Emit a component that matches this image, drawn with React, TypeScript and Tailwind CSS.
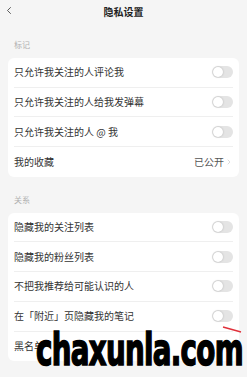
import { ChevronLeft, ChevronRight } from "lucide-react";

const font = { fontFamily: '"Noto Sans CJK SC", "Noto Sans", sans-serif' };

function Toggle() {
  return (
    <div className="w-[21px] h-[12px] rounded-full bg-[#e4e4e4] flex items-center px-[1px]">
      <div className="w-[10px] h-[10px] rounded-full bg-white shadow-[0_0_2px_rgba(0,0,0,0.25)]" />
    </div>
  );
}

function Row({ label, last, right }: { label: string; last?: boolean; right?: React.ReactNode }) {
  return (
    <div className="px-[6px]">
      <div className={`h-[29.7px] flex items-center justify-between ${last ? "" : "border-b border-[#efefef]"}`}>
        <span className="text-[10px] text-[#333] leading-none">{label}</span>
        {right ?? <Toggle />}
      </div>
    </div>
  );
}

function Section({ title, children, top }: { title: string; children: React.ReactNode; top: string }) {
  return (
    <div className={top}>
      <div className="px-[14px] text-[8px] leading-[10px] text-[#b0b0b0] mb-[8px]">{title}</div>
      <div className="mx-[8px] bg-white rounded-[6px]">{children}</div>
    </div>
  );
}

export default function App() {
  return (
    <div className="relative w-[247px] h-[377px] bg-[#f5f5f5] overflow-hidden" style={font}>
      <div className="relative h-[22px] flex items-center justify-center">
        <ChevronLeft className="absolute left-[3px] top-[4px] w-[12px] h-[13px] text-[#333]" strokeWidth={1.6} />
        <span className="text-[10px] font-bold text-[#222]">隐私设置</span>
      </div>

      <Section title="标记" top="mt-[18px]">
        <Row label="只允许我关注的人评论我" />
        <Row label="只允许我关注的人给我发弹幕" />
        <Row label="只允许我关注的人 @ 我" />
        <Row
          label="我的收藏"
          last
          right={
            <span className="flex items-center text-[10px] text-[#555] leading-none">
              已公开
              <ChevronRight className="w-[8px] h-[8px] text-[#c8c8c8] ml-[1px]" strokeWidth={2} />
            </span>
          }
        />
      </Section>

      <Section title="关系" top="mt-[18px]">
        <Row label="隐藏我的关注列表" />
        <Row label="隐藏我的粉丝列表" />
        <Row label="不把我推荐给可能认识的人" />
        <Row label="在「附近」页隐藏我的笔记" />
        <Row label="黑名单" last right={<span />} />
      </Section>

      <svg className="absolute left-[222px] top-[326px]" width="20" height="8" viewBox="0 0 20 8">
        <line x1="1" y1="1" x2="19" y2="6" stroke="#e0303a" strokeWidth="1.3" />
      </svg>

      <div
        className="absolute left-[36px] top-[328px] text-[44px] font-bold text-black leading-none tracking-[-1px] origin-left scale-x-[0.7] whitespace-nowrap [-webkit-text-stroke:1.5px_#000]"
        style={{ fontFamily: '"DejaVu Sans Condensed", "DejaVu Sans", sans-serif' }}
      >
        chaxunla.com
      </div>
    </div>
  );
}
